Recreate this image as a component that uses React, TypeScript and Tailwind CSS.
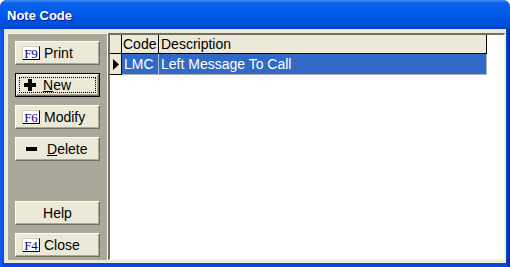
import React from 'react';

const font = { fontFamily: '"Liberation Sans", Arial, sans-serif' };

function KeyBadge({ label }: { label: string }) {
  return (
    <span
      className="flex h-[14px] w-[18px] items-center justify-center border border-t-[#d4d0c8] border-l-[#d4d0c8] border-r-black border-b-black bg-white text-[13px] leading-none text-[#000080]"
      style={{ fontFamily: '"Liberation Serif", "Times New Roman", serif' }}
    >
      {label}
    </span>
  );
}

function PanelButton({
  children,
  isDefault = false,
  center = false,
}: {
  children: React.ReactNode;
  isDefault?: boolean;
  center?: boolean;
}) {
  const inner = (
    <div
      className={`flex h-full w-full items-center gap-[4px] border border-t-white border-l-white border-r-[#716f64] border-b-[#716f64] bg-[#ece9d8] shadow-[inset_-1px_-1px_0_#aca899] text-[14px] text-black ${
        center ? 'justify-center' : 'pl-[6px]'
      }`}
    >
      {children}
    </div>
  );
  if (isDefault) {
    return (
      <div className="relative h-[24px] w-[85px] border border-black">
        {inner}
        <div className="pointer-events-none absolute inset-[3px] border border-dotted border-black" />
      </div>
    );
  }
  return <div className="h-[24px] w-[85px]">{inner}</div>;
}

export default function App() {
  return (
    <div className="h-[267px] w-[510px] overflow-hidden bg-white" style={font}>
      <div className="flex h-full w-full flex-col overflow-hidden rounded-t-[7px] bg-[#0831d9]">
        <div className="flex h-[29px] shrink-0 items-center bg-[linear-gradient(to_bottom,#3d8df5_0%,#0a62ea_10%,#0058e6_50%,#0050dc_85%,#0042c6_100%)] pl-[7px] pt-[3px]">
          <span className="text-[13px] font-bold text-white [text-shadow:1px_1px_0_#0a1e80]">Note Code</span>
        </div>
        <div className="flex min-h-0 flex-1 px-[4px] pb-[4px] bg-[linear-gradient(to_right,#1660e8_0px,#0a48dc_4px,#0a48dc_calc(100%-4px),#0024b0_100%)]">
          <div className="flex flex-1 bg-[#ece9d8] pt-[4px] pb-[3px] pl-[3px] pr-[1px]">
            <div className="flex w-[101px] shrink-0 flex-col justify-between border-t border-l border-r border-t-[#f4f3ee] border-l-[#f4f3ee] border-r-white bg-[#aca899] pl-[7px] pt-[7px] pb-[3px]">
              <div className="flex flex-col gap-[8px]">
                <PanelButton>
                  <KeyBadge label="F9" />
                  <span>Print</span>
                </PanelButton>
                <PanelButton isDefault>
                  <svg width="12" height="12" viewBox="0 0 12 12" className="ml-[1px] mr-[3px]">
                    <rect x="4" y="0" width="4" height="12" fill="black" />
                    <rect x="0" y="4" width="12" height="4" fill="black" />
                  </svg>
                  <span>
                    <span className="underline">N</span>ew
                  </span>
                </PanelButton>
                <PanelButton>
                  <KeyBadge label="F6" />
                  <span>Modify</span>
                </PanelButton>
                <PanelButton>
                  <svg width="11" height="4" viewBox="0 0 11 4" className="ml-[4px] mr-[6px]">
                    <rect x="0" y="0" width="11" height="4" fill="black" />
                  </svg>
                  <span>
                    <span className="underline">D</span>elete
                  </span>
                </PanelButton>
              </div>
              <div className="flex flex-col gap-[8px]">
                <PanelButton center>
                  <span>Help</span>
                </PanelButton>
                <PanelButton>
                  <KeyBadge label="F4" />
                  <span>Close</span>
                </PanelButton>
              </div>
            </div>
            <div className="flex-1 border-t-2 border-l-2 border-r border-b border-t-[#716f64] border-l-[#716f64] border-r-[#f4f3ee] border-b-[#f4f3ee] bg-white">
              <div className="flex h-[19px] w-[377px] text-[14px] text-black">
                <div className="w-[12px] border-r border-b border-black bg-[#ece9d8]" />
                <div className="flex w-[37px] items-center border-r border-b border-black bg-[#ece9d8] pl-[1px]">Code</div>
                <div className="flex flex-1 items-center border-r border-b border-black bg-[#ece9d8] pl-[2px]">Description</div>
              </div>
              <div className="flex h-[21px] w-[377px] text-[14px] text-white">
                <div className="flex w-[12px] items-center justify-center border-r border-b border-black bg-[#ece9d8]">
                  <svg width="6" height="11" viewBox="0 0 6 11">
                    <path d="M0 0 L6 5.5 L0 11 Z" fill="black" />
                  </svg>
                </div>
                <div className="flex w-[37px] items-center border-r border-b border-r-[#a8b8d8] border-b-[#b0b0b0] bg-[#316ac5] pl-[2px]">LMC</div>
                <div className="flex flex-1 items-center border-r border-b border-r-[#b0b0b0] border-b-[#b0b0b0] bg-[#316ac5] pl-[2px]">Left Message To Call</div>
              </div>
            </div>
          </div>
        </div>
      </div>
    </div>
  );
}
